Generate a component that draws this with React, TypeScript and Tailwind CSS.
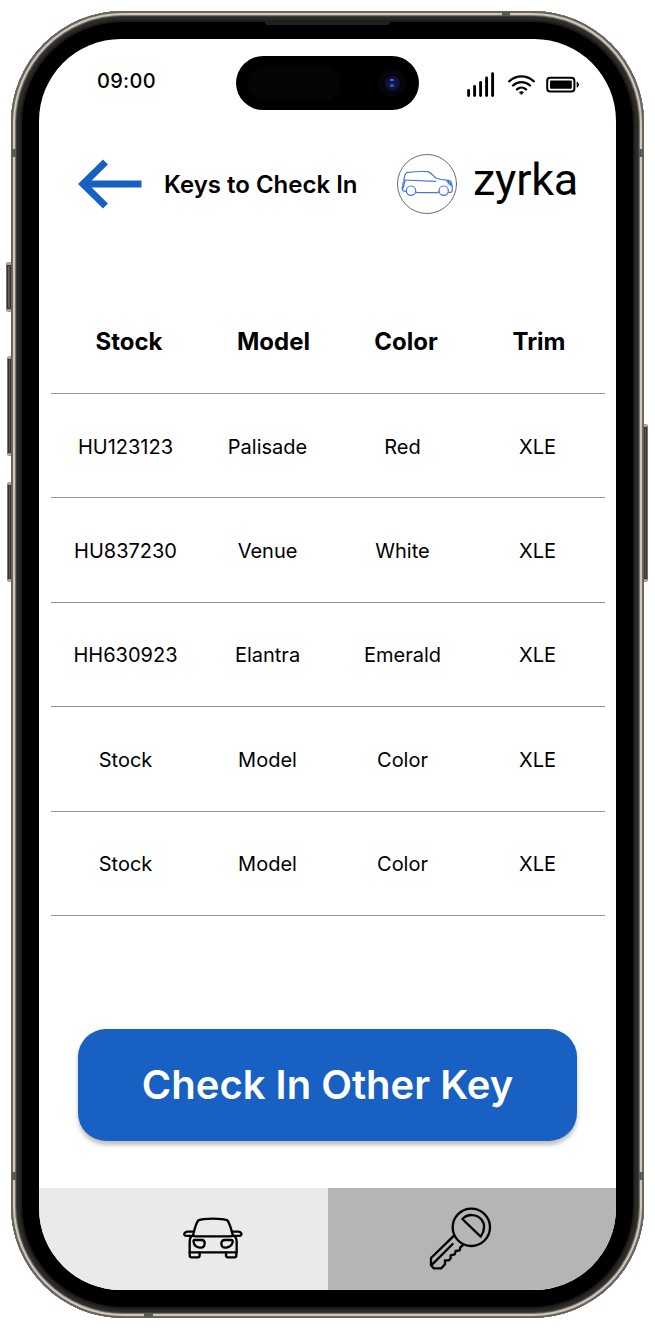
import React from "react";

const columns = [
  { label: "Stock", shift: "pl-[7px]" },
  { label: "Model", shift: "pl-[12px]" },
  { label: "Color", shift: "pl-[7px]" },
  { label: "Trim", shift: "pl-[3px]" },
];

const rows = [
  ["HU123123", "Palisade", "Red", "XLE"],
  ["HU837230", "Venue", "White", "XLE"],
  ["HH630923", "Elantra", "Emerald", "XLE"],
  ["Stock", "Model", "Color", "XLE"],
  ["Stock", "Model", "Color", "XLE"],
];

const grid = "grid grid-cols-[149px_135px_135px_135px] items-center pt-[2px] text-center";

function ArrowLeft() {
  return (
    <svg className="h-[50px] w-[64px]" viewBox="0 0 64 50" fill="none" stroke="#1860c1" strokeWidth="7">
      <path d="M63.5 25H5M27.5 3L5 25L27.5 47" />
    </svg>
  );
}

function Logo() {
  return (
    <svg className="h-[60px] w-[60px]" viewBox="21 27 180 180" fill="none" strokeLinecap="round" strokeLinejoin="round">
      <circle cx="111" cy="117" r="88.5" stroke="#444" strokeWidth="2.4" />
      <g stroke="#4676e8" strokeWidth="3.6">
        <path d="M41 105C44 95 45 84 50 83C72 80 95 79 112 80C123 81 129 93 138 99C149 105 172 104 181 108C187 113 187 123 187 136C186 142 181 143 176 142" />
        <path d="M41 105L137 109M46 108C38 111 36 119 41 122M38 124C34 132 37 138 44 139L50 138M45 108L41 122M42 122L38 132M77 141L82 143H142L147 140M171 108C175 113 178 120 185 122M175 109C182 113 184 118 185 123" />
        <circle cx="63" cy="137" r="14" />
        <circle cx="161" cy="137" r="14" />
      </g>
    </svg>
  );
}

function StatusIcons() {
  return (
    <svg className="h-[28px] w-[116px]" viewBox="0 0 116 28" fill="none" stroke="#000" strokeLinecap="round">
      <path strokeWidth="2.9" d="M2.6 19.5V24.5M8.6 15.5V24.5M14.6 11.5V24.5M20.6 7V24.5M26.6 2.8V24.5" />
      <g strokeWidth="2.3">
        <path d="M43.2 10.3C50.3 3.8 60.7 3.8 67.8 10.3M47 14.5C52 10 59 10 64 14.5M51 18.4C53.6 16.1 57.4 16.1 60 18.4" />
      </g>
      <path d="M53.4 21.2Q55.5 19.7 57.6 21.2L55.5 23.5Z" fill="#000" strokeWidth=".6" />
      <rect x="81.2" y="6.8" width="27.2" height="13.6" rx="3" strokeWidth="2" />
      <rect x="84" y="9.4" width="21.8" height="8.4" rx="1" fill="#000" stroke="none" />
      <path d="M111.5 11.3Q113.8 13.6 111.5 16Z" fill="#000" strokeWidth="1" />
    </svg>
  );
}

function CarIcon() {
  return (
    <svg className="h-[42px] w-[60px]" viewBox="38 83 180 126" fill="none" stroke="#000" strokeWidth="7" strokeLinejoin="round" strokeLinecap="round">
      <path d="M68 139C72 122 76 103 84 93C99 86 156 86 171 93C179 103 183 122 188 139Q184 141 178 141H76Q70 141 68 139Z" />
      <path d="M68 139C60 141 58 148 58 158V189H199V158C199 148 196 141 188 139" />
      <path d="M68 127H55C43 125 38 136 45 139L64 140M188 127H200C213 125 217 136 210 139L191 140" />
      <path d="M58 190V198Q58 204 64 204H82Q88 204 88 198V190M167 190V198Q167 204 173 204H192Q198 204 198 198V190" />
      <path d="M73 152H94Q103 152 103 162Q102 175 92 175H88Q72 172 70 159Q68 152 73 152ZM183 152H164Q153 152 153 164Q154 175 164 175H168Q184 172 187 159Q188 152 183 152Z" />
    </svg>
  );
}

function KeyIcon() {
  return (
    <svg className="h-[64px] w-[64px]" viewBox="42 50 192 192" fill="none" stroke="#000" strokeWidth="7" strokeLinejoin="round" strokeLinecap="round">
      <circle cx="169" cy="111" r="56" />
      <path d="M142 86C158 69 185 71 199 87C210 101 210 120 197 139Z" />
      <path d="M117 136L48 203V225L56 234H79L90 222V210H102L107 204V195L119 192L122 182L134 180L136 171L145 163M113 161L52 222" />
    </svg>
  );
}

function HardwareButton({ className }: { className: string }) {
  return (
    <div className={`absolute border-x border-x-[#77716a] border-y-[3px] border-y-[#aaa299] bg-linear-to-r from-[#858078] to-[#38332f] ring-1 ring-[#37332f] ring-inset ${className}`} />
  );
}

export default function App() {
  return (
    <main className="relative h-[1328px] w-[655px] overflow-hidden bg-white pt-[11px] pl-[11px] font-['Inter',sans-serif] text-black">
      <HardwareButton className="top-[262px] left-[6px] h-[50px] w-[6px] rounded-l-[2px]" />
      <HardwareButton className="top-[356px] left-[7px] h-[100px] w-[5px] rounded-l-[2px]" />
      <HardwareButton className="top-[482px] left-[7px] h-[100px] w-[5px] rounded-l-[2px]" />
      <HardwareButton className="top-[424px] left-[643px] h-[158px] w-[5px] rounded-r-[2px]" />

      <div className="relative h-[1307px] w-[633px] rounded-[112px] bg-black p-[28px] shadow-[inset_0_0_0_1px_#65615c,inset_0_0_0_2px_#6f6a64,inset_0_0_0_4px_#d0c8be,inset_0_0_0_5px_#79736c,inset_0_0_0_6px_#3d3a37,inset_0_0_0_9px_#2b2a27,inset_0_0_0_11px_#1c1b1a]">
        <div className="absolute top-[10px] left-[254px] h-[4px] w-[125px] rounded-b-[3px] bg-[#222120]" />
        <div className="absolute top-px left-[491px] h-[4px] w-[8px] bg-[#5c5955]" />
        <div className="absolute bottom-px left-[133px] h-[4px] w-[9px] bg-[#5c5955]" />
        <div className="absolute top-[138px] left-px h-[8px] w-[4px] bg-[#5c5955]" />
        <div className="absolute top-[138px] right-px h-[8px] w-[4px] bg-[#5c5955]" />
        <div className="absolute bottom-[138px] left-px h-[8px] w-[4px] bg-[#5c5955]" />
        <div className="absolute right-px bottom-[138px] h-[8px] w-[4px] bg-[#5c5955]" />

        <div className="flex h-[1251px] w-[577px] flex-col overflow-hidden rounded-[82px] bg-white">
          <header className="flex h-[86px] items-start pl-[58px]">
            <time className="mt-[29px] w-[139px] text-[20px] leading-[26px] font-medium tracking-[0.3px]">09:00</time>
            <div className="mt-[17px] flex h-[54px] w-[183px] items-center justify-between rounded-full bg-black pr-[13px] pl-[11px]">
              <div className="h-[33px] w-[94px] rounded-full bg-[#050505]" />
              <div className="flex size-[28px] items-center justify-center rounded-full bg-[#08040b]">
                <div className="flex size-[15px] flex-col items-center justify-center gap-[3px] rounded-full bg-radial from-[#101452] from-30% to-[#0b0a20]">
                  <div className="h-[2px] w-[4px] rounded-full bg-[#6265bd]" />
                  <div className="h-[3px] w-[4px] rounded-full bg-[#216b91]" />
                </div>
              </div>
            </div>
            <div className="mt-[32px] ml-[47px]">
              <StatusIcons />
            </div>
          </header>

          <nav className="mt-[29px] flex h-[60px] items-center pl-[39px]">
            <button aria-label="Back"><ArrowLeft /></button>
            <h1 className="ml-[22px] w-[233px] pt-[2px] text-[24px] leading-[30px] font-semibold whitespace-nowrap">Keys to Check In</h1>
            <Logo />
            <span className="ml-[16px] pb-[8px] font-['Roboto',sans-serif] text-[45px] leading-[54px] tracking-[-0.2px]">zyrka</span>
          </nav>

          <section className="mt-[75px] ml-[12px] w-[554px]">
            <div className={`${grid} h-[105px] border-b border-[#959595] text-[24px] font-bold`}>
              {columns.map((c) => (
                <div key={c.label} className={c.shift}>{c.label}</div>
              ))}
            </div>
            {rows.map((row, i) => (
              <div key={i} className={`${grid} h-[104.4px] border-b border-[#959595] text-[20px]`}>
                {row.map((cell, j) => (
                  <div key={j}>{cell}</div>
                ))}
              </div>
            ))}
          </section>

          <button className="mt-[113px] ml-[39px] h-[112px] w-[499px] shrink-0 rounded-[28px] bg-[#1860c1] text-[40px] font-semibold text-white shadow-[0_4px_4px_rgba(0,0,0,0.25)]">
            Check In Other Key
          </button>

          <footer className="mt-auto grid h-[102px] shrink-0 grid-cols-[289px_288px]">
            <button aria-label="Cars" className="flex items-start bg-[#eaeaea] pt-[29px] pl-[144px]"><CarIcon /></button>
            <button aria-label="Keys" className="flex items-start bg-[#b5b5b5] pt-[19px] pl-[101px]"><KeyIcon /></button>
          </footer>
        </div>
      </div>
    </main>
  );
}
